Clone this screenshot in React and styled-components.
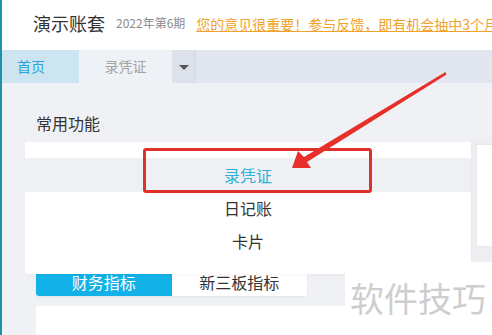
import React from 'react';
import styled, { createGlobalStyle } from 'styled-components';

const GlobalStyle = createGlobalStyle`
  body {
    margin: 0;
    font-family: "Noto Sans CJK SC", "Noto Sans", sans-serif;
    background: #ffffff;
  }
`;

const Screen = styled.div`
  position: relative;
  width: 490px;
  height: 335px;
  overflow: hidden;
  border-left: 2px solid #2191a6;
  display: flex;
  flex-direction: column;
  background: #f0f1f5;
`;

const Header = styled.div`
  height: 46px;
  padding: 0 0 4px 31px;
  background: #ffffff;
  display: flex;
  align-items: center;
  white-space: nowrap;
  overflow: hidden;
  flex-shrink: 0;
`;

const BookName = styled.span`
  font-size: 18px;
  color: #333333;
  line-height: 24px;
`;

const Period = styled.span`
  font-size: 12px;
  color: #8c8c8c;
  margin-left: 11px;
  line-height: 18px;
`;

const FeedbackLink = styled.a`
  font-size: 14px;
  color: #f2a22b;
  text-decoration: underline;
  margin-left: 11px;
  line-height: 20px;
  padding-top: 2px;
`;

const TabBar = styled.div`
  height: 33px;
  background: #e2e6ee;
  display: flex;
  flex-shrink: 0;
`;

const Tab = styled.div`
  width: ${(p) => p.$width}px;
  font-size: 14px;
  line-height: 33px;
  background: ${(p) => (p.$active ? '#cde4f1' : '#eef1f5')};
  color: ${(p) => (p.$active ? '#2aa4d8' : '#a3a3a3')};
  padding-left: ${(p) => (p.$active ? '15px' : '0')};
  text-align: ${(p) => (p.$active ? 'left' : 'center')};
  box-sizing: border-box;
`;

const CaretTab = styled.div`
  width: 23px;
  background: #dde2ea;
  border-right: 1px solid #d4d9e1;
  display: flex;
  align-items: center;
  justify-content: center;

  &::after {
    content: '';
    border-left: 5px solid transparent;
    border-right: 5px solid transparent;
    border-top: 5px solid #555555;
    margin-top: 1px;
  }
`;

const Content = styled.div`
  flex: 1;
  padding-left: 23px;
  display: flex;
  flex-direction: column;
`;

const SectionTitle = styled.div`
  font-size: 16px;
  line-height: 22px;
  color: #333333;
  margin: 29px 0 0 11px;
`;

const FunctionRow = styled.div`
  margin-top: 8px;
  height: 120px;
  display: flex;
`;

const FunctionCard = styled.div`
  position: relative;
  width: 446px;
  background: #ffffff;
  z-index: 2;
`;

const Menu = styled.div`
  position: absolute;
  left: 0;
  right: 0;
  top: 0;
  padding: 16px 0;
  background: #ffffff;
  box-shadow: 0 1px 3px rgba(0, 0, 0, 0.04);
`;

const MenuItem = styled.div`
  height: ${(p) => (p.$selected ? 34 : 33)}px;
  line-height: ${(p) => (p.$selected ? 34 : 33)}px;
  text-align: center;
  font-size: 16px;
  color: ${(p) => (p.$selected ? '#2fb0d6' : '#333333')};
  background: ${(p) => (p.$selected ? '#eef0f4' : '#ffffff')};
`;

const SidePanel = styled.div`
  flex: 1;
  margin-top: -2px;
  height: 122px;
  padding: 4px 0 0 5px;
  box-sizing: border-box;
  background: #eceef2;
`;

const SideCard = styled.div`
  height: 103px;
  background: #ffffff;
  border: 1px solid #e5e7eb;
  border-right: none;
  box-sizing: border-box;
`;

const IndicatorTabs = styled.div`
  margin: 6px 0 0 11px;
  width: 271px;
  height: 28px;
  display: flex;
  border-radius: 0 0 3px 3px;
  overflow: hidden;
  background: #ffffff;
  box-shadow: 0 1px 2px rgba(0, 0, 0, 0.06);
`;

const IndicatorTab = styled.div`
  flex: 1;
  text-align: center;
  font-size: 16px;
  line-height: 28px;
  background: ${(p) => (p.$active ? '#12b1e8' : '#ffffff')};
  color: ${(p) => (p.$active ? '#ffffff' : '#333333')};
`;

const BottomPanel = styled.div`
  flex: 1;
  margin: 10px 0 0 11px;
  background: #ffffff;
`;

const Watermark = styled.div`
  position: absolute;
  left: 343px;
  top: 262px;
  right: 0;
  bottom: 0;
  background: #ffffff;
  color: #cecece;
  font-size: 34px;
  line-height: 40px;
  padding: 16px 0 0 5px;
  z-index: 3;
`;

const Highlight = styled.div`
  position: absolute;
  left: 141px;
  top: 148px;
  width: 229px;
  height: 45px;
  border: 3px solid #e0302a;
  border-radius: 3px;
  box-sizing: border-box;
  z-index: 4;
`;

const ArrowLayer = styled.svg`
  position: absolute;
  left: -2px;
  top: 0;
  z-index: 5;
  pointer-events: none;
`;

export default function App() {
  return (
    <>
      <GlobalStyle />
      <Screen>
        <Header>
          <BookName>演示账套</BookName>
          <Period>2022年第6期</Period>
          <FeedbackLink>您的意见很重要！参与反馈，即有机会抽中3个月</FeedbackLink>
        </Header>
        <TabBar>
          <Tab $active $width={77}>首页</Tab>
          <Tab $width={93}>录凭证</Tab>
          <CaretTab />
        </TabBar>
        <Content>
          <SectionTitle>常用功能</SectionTitle>
          <FunctionRow>
            <FunctionCard>
              <Menu>
                <MenuItem $selected>录凭证</MenuItem>
                <MenuItem>日记账</MenuItem>
                <MenuItem>卡片</MenuItem>
              </Menu>
            </FunctionCard>
            <SidePanel>
              <SideCard />
            </SidePanel>
          </FunctionRow>
          <IndicatorTabs>
            <IndicatorTab $active>财务指标</IndicatorTab>
            <IndicatorTab>新三板指标</IndicatorTab>
          </IndicatorTabs>
          <BottomPanel />
        </Content>
        <Watermark>软件技巧</Watermark>
        <Highlight />
        <ArrowLayer width="492" height="335" viewBox="0 0 492 335">
          <polygon
            points="292,168 298,151 304,157 445.5,72 446.5,74.5 307,162 311,168"
            fill="#e8302a"
          />
        </ArrowLayer>
      </Screen>
    </>
  );
}
